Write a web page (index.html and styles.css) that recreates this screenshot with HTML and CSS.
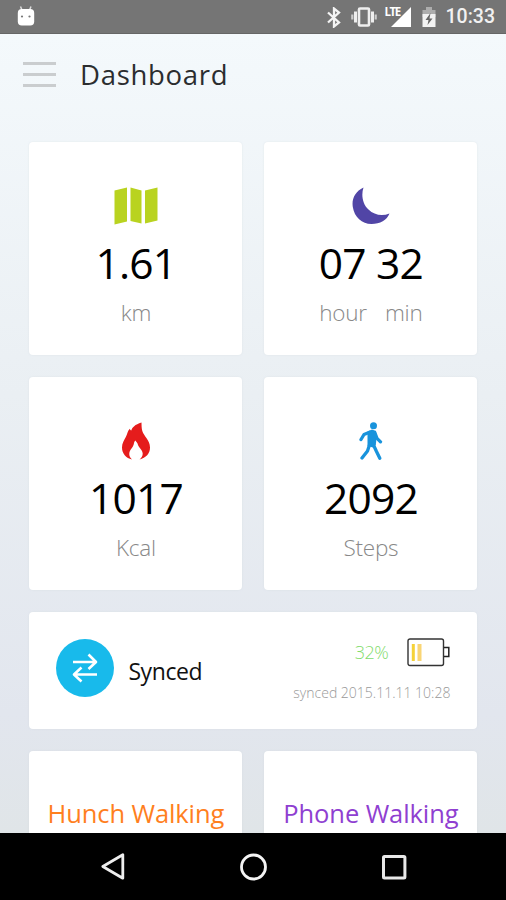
FILE: index.html
```
<!DOCTYPE html>
<html lang="en">
<head>
  <meta charset="UTF-8">
  <title>Dashboard</title>
  <link rel="stylesheet" href="styles.css">
</head>
<body>

  <div class="status-bar">
    <svg class="debug-icon" width="18" height="20" viewBox="0 0 18 20">
      <path d="M3.500 0.500L5 4M14 0.500L12.500 4" stroke="#ddd" stroke-width="1.500"/>
      <rect x="0.800" y="3" width="16.400" height="16.500" rx="4" fill="#fff"/>
      <circle cx="5" cy="10.500" r="1.100" fill="#777"/>
      <circle cx="12.500" cy="10.500" r="1.100" fill="#777"/>
    </svg>
    <div class="status-right">
      <svg class="bluetooth" width="14" height="21" viewBox="0 0 14 21">
        <path d="M1 5.500L12 15.500L7 19.500V1.500L12 5.500L1 15.500" fill="none" stroke="#f4f4f4" stroke-width="2.300"/>
      </svg>
      <svg class="vibrate" width="26" height="20" viewBox="0 0 26 20">
        <rect x="8" y="1.500" width="10" height="17" rx="1" fill="none" stroke="#eee" stroke-width="2.600"/>
        <path d="M4.500 4.500V15.500M21.500 4.500V15.500" stroke="#eee" stroke-width="3"/>
        <path d="M1.300 7.500V12.500M24.700 7.500V12.500" stroke="#ccc" stroke-width="2.200"/>
      </svg>
      <div class="signal">
        <span class="lte">LTE</span>
        <svg width="20" height="20" viewBox="0 0 20 20"><path d="M20 0V20H0Z" fill="#fff"/></svg>
      </div>
      <svg class="charge" width="14" height="21" viewBox="0 0 14 21">
        <path d="M4 0H10V3H13.500V10H0.500V3H4Z" fill="#adadad"/>
        <path d="M0.500 7H13.500V20H0.500Z" fill="#f2f2f2"/>
        <path d="M8.500 6L3.500 13H6.500L5.500 18L10.500 11.500H7.500Z" fill="#666"/>
      </svg>
      <span class="clock">10:33</span>
    </div>
  </div>

  <div class="screen">
    <div class="header">
      <div class="menu-btn">
        <span></span>
        <span></span>
        <span></span>
      </div>
      <h1>Dashboard</h1>
    </div>

    <div class="cards">
      <div class="card">
        <svg width="44" height="38" viewBox="0 0 44 38" fill="#b9d320">
          <path d="M0.500 3.500L13 0.500V34.500L0.500 37.500Z"/>
          <path d="M16.500 0.500L27.500 3.500V36.500L16.500 34Z"/>
          <path d="M31 3.500L43.500 0.500V33.500L31 36.500Z"/>
        </svg>
        <div class="value">1.61</div>
        <div class="unit">km</div>
      </div>

      <div class="card">
        <svg width="38" height="38" viewBox="0 0 38 38">
          <path d="M11.500 0.500C3 4.500 -0.500 12 0.800 20C2.300 30 10 37 19.500 37C28 37 35 33 37.500 26.500C30 29.500 22 28 16.500 22.500C10.500 17 9 8 11.500 0.500Z" fill="#5145a6"/>
        </svg>
        <div class="value time">07 32</div>
        <div class="unit time-unit"><span>hour</span><span>min</span></div>
      </div>

      <div class="card">
        <svg width="30" height="38" viewBox="0 0 30 38">
          <path d="M20.500 0.500C14 2.500 11 5.500 10.300 8.500C9.400 8.200 9 7.500 8.800 6.800C6.500 9 6.500 12 4.800 15C3 18.500 1 21 1 25.500C1 31.500 5 36.300 11 37.400C8.500 35.500 7.800 32.500 8.500 30C9.400 27 12 25.500 12.700 22.500C13 21 13.200 19.500 14.500 18.500C15.500 20.500 16.500 20.500 17 23C18 26 21.500 28 21.700 31.500C21.800 34 20.500 36 18.500 37.400C25 36 29 31.500 29 25.500C29 18 23 14.500 21.300 9C20.500 6 20.600 3.500 20.500 0.500Z" fill="#e51c1c"/>
        </svg>
        <div class="value">1017</div>
        <div class="unit">Kcal</div>
      </div>

      <div class="card">
        <svg width="24" height="38" viewBox="0 0 24 38">
          <circle cx="14.500" cy="3.700" r="3.500" fill="#1893dc"/>
          <path d="M8.500 9.500L13 7.600L17 9L17.500 16L16.800 23L14 25.500L8.500 24Z" fill="#1893dc"/>
          <path d="M10.500 10.300L5 12.500L2 17.500M15.800 10.500L18 16.300L21.500 19.800M10.800 22L8.500 29L3 36M14.500 23L17.500 29.500L20.800 36.200" fill="none" stroke="#1893dc" stroke-width="3.300" stroke-linecap="round" stroke-linejoin="round"/>
        </svg>
        <div class="value">2092</div>
        <div class="unit">Steps</div>
      </div>

      <div class="sync-card">
        <div class="sync-icon">
          <svg width="26" height="30" viewBox="0 0 26 30" fill="none" stroke="#fff" stroke-width="2.600" stroke-linejoin="round">
            <path d="M1 9H24M16.500 1.500L24 9L16.500 16"/>
            <path d="M25 21.500H2M9.500 14.500L2 21.500L9.500 28.500"/>
          </svg>
        </div>
        <div class="sync-label">Synced</div>
        <div class="sync-info">
          <div class="battery">
            <span class="percent">32%</span>
            <svg width="43" height="29" viewBox="0 0 43 29" fill="none">
              <rect x="1" y="1" width="35.500" height="26.500" rx="2" stroke="#333" stroke-width="1.400"/>
              <path d="M37 9.500H41.800V18.500H37" stroke="#222" stroke-width="1.500"/>
              <rect x="4.800" y="6" width="3" height="17" fill="#f5d238"/>
              <rect x="10.500" y="6" width="4" height="17" fill="#f9d575"/>
            </svg>
          </div>
          <div class="sync-time">synced 2015.11.11 10:28</div>
        </div>
      </div>

      <div class="card walk hunch">Hunch Walking</div>
      <div class="card walk phone">Phone Walking</div>
    </div>
  </div>

  <div class="nav-bar">
    <svg width="26" height="30" viewBox="0 0 26 30"><path d="M23.800 2.800V26.200L3.800 14.500Z" fill="none" stroke="#eee" stroke-width="2.800" stroke-linejoin="round"/></svg>
    <svg width="28" height="28" viewBox="0 0 28 28"><circle cx="14.500" cy="14" r="12" fill="none" stroke="#f4f4f4" stroke-width="2.800"/></svg>
    <svg width="26" height="26" viewBox="0 0 26 26"><rect x="2.500" y="2.500" width="21.400" height="21.400" rx="1" fill="none" stroke="#e8e8e8" stroke-width="3"/></svg>
  </div>

</body>
</html>
```
FILE: styles.css
```
* {
  box-sizing: border-box;
}

body {
  margin: 0;
  height: 900px;
  display: flex;
  flex-direction: column;
  overflow: hidden;
  font-family: "Open Sans", sans-serif;
  background: #000;
}

svg {
  display: block;
  flex: none;
}

.status-bar {
  flex: none;
  height: 34px;
  padding: 0 11px 0 17px;
  display: flex;
  align-items: center;
  justify-content: space-between;
  background: #757575;
  border-bottom: 1px solid #666;
}

.debug-icon {
  margin-bottom: 2px;
}

.status-right {
  display: flex;
  align-items: center;
  padding-top: 1px;
}

.vibrate {
  margin-left: 10px;
}

.signal {
  display: flex;
  align-items: flex-start;
  margin-left: 8px;
}

.lte {
  width: 14px;
  margin-right: -8px;
  font: bold 11.500px/10px "Open Sans", sans-serif;
  letter-spacing: -1.400px;
  color: #fff;
}

.charge {
  margin-left: 11px;
}

.clock {
  margin-left: 10px;
  font: 500 19.500px/34px Roboto, sans-serif;
  color: #f1f1f1;
}

.screen {
  flex: 1;
  min-height: 0;
  overflow: hidden;
  background: linear-gradient(#f4f9fc, #eaeff3 45%, #e2e6ee 85%, #e0e5e8);
}

.header {
  display: flex;
  align-items: center;
  height: 80px;
  padding-left: 23px;
}

.menu-btn {
  width: 33px;
  display: flex;
  flex-direction: column;
  gap: 8px;
}

.menu-btn span {
  height: 3px;
  background: #cacdcf;
}

h1 {
  margin: 0 0 0 24px;
  font-size: 27.500px;
  font-weight: 500;
  letter-spacing: 0.700px;
  color: #2b2d2f;
}

.cards {
  display: grid;
  grid-template-columns: 213px 213px;
  grid-template-rows: 213px 213px 117px 213px;
  gap: 22px;
  padding: 28.400px 0 0 29.400px;
}

.card,
.sync-card {
  background: #fff;
  border-radius: 4px;
  box-shadow: 0 0 2px rgba(200, 208, 216, 0.4);
}

.card {
  display: flex;
  flex-direction: column;
  align-items: center;
  padding-top: 45px;
}

.value {
  margin-top: 8px;
  font-size: 42.500px;
  line-height: 60px;
  letter-spacing: -0.800px;
  color: #000;
}

.unit {
  margin-top: 5px;
  font-size: 22.500px;
  font-weight: 300;
  line-height: 30px;
  letter-spacing: -0.200px;
  color: #888;
}

.time-unit {
  display: flex;
  gap: 18px;
}

.sync-card {
  grid-column: span 2;
  display: flex;
  align-items: center;
  padding: 0 27px 0 27px;
}

.sync-icon {
  width: 58px;
  height: 58px;
  margin-bottom: 5px;
  border-radius: 50%;
  background: #18baeb;
  display: flex;
  align-items: center;
  justify-content: center;
}

.sync-label {
  margin-left: 14px;
  font-size: 23px;
  letter-spacing: -0.400px;
  color: #111;
}

.sync-info {
  margin-left: auto;
  display: flex;
  flex-direction: column;
  align-items: flex-end;
}

.battery {
  display: flex;
  align-items: center;
  gap: 19px;
}

.percent {
  margin-bottom: 2px;
  font-size: 18px;
  font-weight: 300;
  letter-spacing: -0.500px;
  color: #82dc6c;
}

.sync-time {
  margin-top: 16px;
  font-size: 14px;
  font-weight: 300;
  line-height: 20px;
  color: #999;
}

.walk {
  padding-top: 45px;
  font-size: 25.500px;
  line-height: 34px;
  letter-spacing: -0.100px;
  white-space: nowrap;
}

.hunch {
  color: #ff7f1e;
}

.phone {
  color: #8f3fd1;
}

.nav-bar {
  flex: none;
  height: 67px;
  display: flex;
  align-items: center;
  justify-content: center;
  gap: 114px;
  background: #000;
}
```
